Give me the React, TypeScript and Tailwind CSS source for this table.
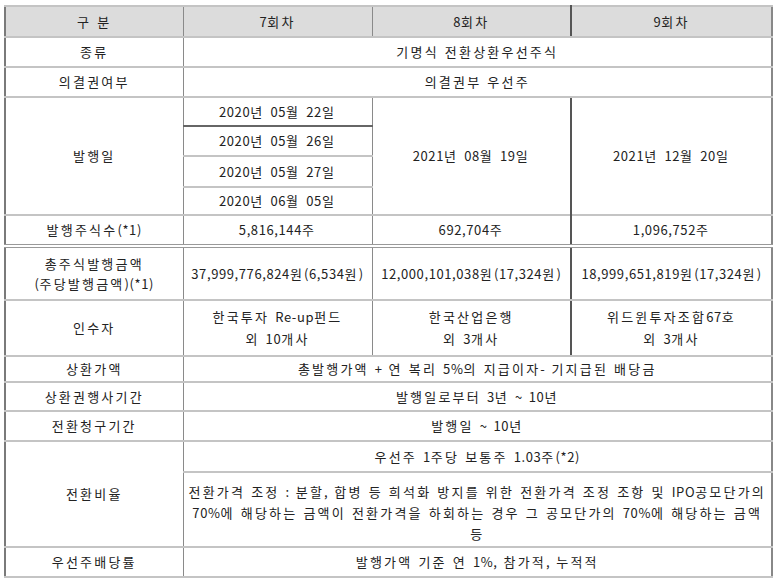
import React from 'react';

const cell = 'border-x border-x-[#8a8a8a] border-y-2 border-y-[#c4c4c4] text-center align-middle px-1';
const mid = 'border-r-2 border-r-[#555]';
const dbl = 'border-b-4 border-double border-b-[#999]';

// 한글 구간만 자간을 넓혀서 굴림체 느낌을 맞춤
function T({ children }: { children: string }) {
  const parts = children.split(/([\uAC00-\uD7A3]+)/);
  return (
    <>
      {parts.map((p, i) =>
        /[\uAC00-\uD7A3]/.test(p) ? (
          <span key={i} className="tracking-[2.2px]">
            {p}
          </span>
        ) : (
          p
        )
      )}
    </>
  );
}

export default function App() {
  return (
    <div className="w-[773px] h-[582px] bg-white pl-[4px] pt-[5px] text-[13px] leading-[20px] text-[#222] tracking-[0.6px] [word-spacing:2.5px] font-['Noto_Sans_CJK_KR','Noto_Sans',sans-serif]">
      <table className="table-fixed w-[767px] border-collapse border-t-2 border-t-[#333] border-l-2 border-l-[#7a7a7a] border-r-2 border-r-[#888] border-b-2 border-b-[#777]">
        <colgroup>
          <col className="w-[178px]" />
          <col className="w-[189px]" />
          <col className="w-[199px]" />
          <col className="w-[201px]" />
        </colgroup>
        <tbody>
          {/* 헤더 */}
          <tr className="h-[31px] bg-[#dcdcdc]">
            <td className={cell}><T>구 분</T></td>
            <td className={cell}><T>7회차</T></td>
            <td className={`${cell} ${mid}`}><T>8회차</T></td>
            <td className={cell}><T>9회차</T></td>
          </tr>
          <tr className="h-[30px]">
            <td className={cell}><T>종류</T></td>
            <td className={cell} colSpan={3}><T>기명식 전환상환우선주식</T></td>
          </tr>
          <tr className="h-[30px]">
            <td className={cell}><T>의결권여부</T></td>
            <td className={cell} colSpan={3}><T>의결권부 우선주</T></td>
          </tr>

          {/* 발행일 */}
          <tr className="h-[29px]">
            <td className={cell} rowSpan={4}><T>발행일</T></td>
            <td className={`${cell} border-b-[#666]`}><T>2020년 05월 22일</T></td>
            <td className={`${cell} ${mid}`} rowSpan={4}><T>2021년 08월 19일</T></td>
            <td className={cell} rowSpan={4}><T>2021년 12월 20일</T></td>
          </tr>
          <tr className="h-[30px]">
            <td className={cell}><T>2020년 05월 26일</T></td>
          </tr>
          <tr className="h-[31px]">
            <td className={cell}><T>2020년 05월 27일</T></td>
          </tr>
          <tr className="h-[28px]">
            <td className={cell}><T>2020년 06월 05일</T></td>
          </tr>

          <tr className="h-[31px]">
            <td className={`${cell} ${dbl}`}><T>발행주식수(*1)</T></td>
            <td className={`${cell} ${dbl}`}><T>5,816,144주</T></td>
            <td className={`${cell} ${dbl} ${mid}`}><T>692,704주</T></td>
            <td className={`${cell} ${dbl}`}><T>1,096,752주</T></td>
          </tr>

          {/* 금액 */}
          <tr className="h-[54px]">
            <td className={cell}>
              <T>총주식발행금액</T>
              <br />
              <T>(주당발행금액)(*1)</T>
            </td>
            <td className={`${cell} whitespace-nowrap`}><T>37,999,776,824원(6,534원)</T></td>
            <td className={`${cell} whitespace-nowrap ${mid}`}><T>12,000,101,038원(17,324원)</T></td>
            <td className={`${cell} whitespace-nowrap`}><T>18,999,651,819원(17,324원)</T></td>
          </tr>
          <tr className="h-[56px]">
            <td className={cell}><T>인수자</T></td>
            <td className={`${cell} leading-[22px]`}>
              <T>한국투자 Re-up펀드</T>
              <br />
              <T>외 10개사</T>
            </td>
            <td className={`${cell} leading-[22px] ${mid}`}>
              <T>한국산업은행</T>
              <br />
              <T>외 3개사</T>
            </td>
            <td className={`${cell} leading-[22px]`}>
              <T>위드윈투자조합67호</T>
              <br />
              <T>외 3개사</T>
            </td>
          </tr>

          <tr className="h-[26px]">
            <td className={cell}><T>상환가액</T></td>
            <td className={cell} colSpan={3}><T>총발행가액 + 연 복리 5%의 지급이자- 기지급된 배당금</T></td>
          </tr>
          <tr className="h-[29px]">
            <td className={cell}><T>상환권행사기간</T></td>
            <td className={cell} colSpan={3}><T>발행일로부터 3년 ~ 10년</T></td>
          </tr>
          <tr className="h-[30px]">
            <td className={cell}><T>전환청구기간</T></td>
            <td className={cell} colSpan={3}><T>발행일 ~ 10년</T></td>
          </tr>

          {/* 전환비율 */}
          <tr className="h-[31px]">
            <td className={cell} rowSpan={2}><T>전환비율</T></td>
            <td className={cell} colSpan={3}><T>우선주 1주당 보통주 1.03주(*2)</T></td>
          </tr>
          <tr className="h-[75px]">
            <td className={`${cell} px-[2px] pt-[5px] leading-[21px] whitespace-nowrap`} colSpan={3}>
              <T>전환가격 조정 : 분할, 합병 등 희석화 방지를 위한 전환가격 조정 조항 및 IPO공모단가의</T>
              <br />
              <T>70%에 해당하는 금액이 전환가격을 하회하는 경우 그 공모단가의 70%에 해당하는 금액</T>
              <br />
              <T>등</T>
            </td>
          </tr>

          <tr className="h-[30px]">
            <td className={cell}><T>우선주배당률</T></td>
            <td className={cell} colSpan={3}><T>발행가액 기준 연 1%, 참가적, 누적적</T></td>
          </tr>
        </tbody>
      </table>
    </div>
  );
}
